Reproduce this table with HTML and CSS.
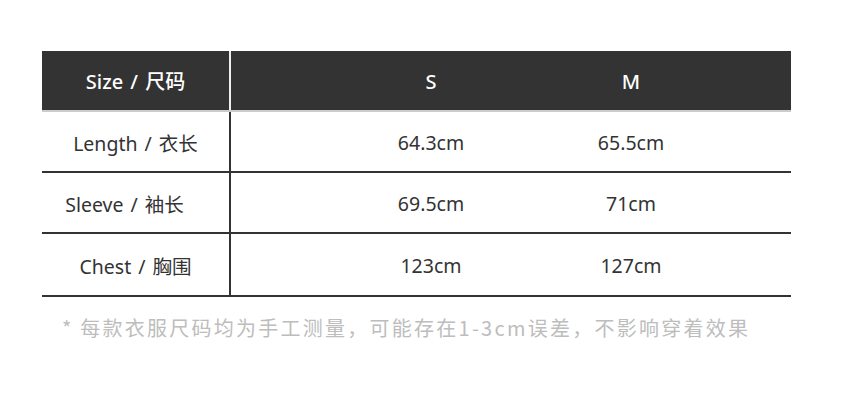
FILE: index.html
```html
<!DOCTYPE html>
<html lang="zh">
<head>
<meta charset="utf-8">
<title>Size Chart</title>
<link rel="stylesheet" href="styles.css">
</head>
<body>
<div class="chart">
  <div class="row head">
    <div class="label">Size / 尺码</div>
    <div class="vals"><div class="val">S</div><div class="val">M</div></div>
  </div>
  <div class="row">
    <div class="label">Length / 衣长</div>
    <div class="vals"><div class="val">64.3cm</div><div class="val">65.5cm</div></div>
  </div>
  <div class="row">
    <div class="label"><span class="shift-left">Sleeve / 袖长</span></div>
    <div class="vals"><div class="val">69.5cm</div><div class="val">71cm</div></div>
  </div>
  <div class="row last">
    <div class="label">Chest / 胸围</div>
    <div class="vals"><div class="val">123cm</div><div class="val">127cm</div></div>
  </div>
</div>
<p class="note">* 每款衣服尺码均为手工测量，可能存在1-3cm误差，不影响穿着效果</p>
</body>
</html>
```

FILE: styles.css
```css
html, body {
  margin: 0;
  padding: 0;
  background: #fff;
}
body {
  font-family: "Noto Sans", "Noto Sans CJK SC", sans-serif;
  color: #333;
}
.chart {
  margin: 51px 0 0 42px;
  width: 749px;
}
.row {
  display: flex;
  height: 59px;
  border-bottom: 2px solid #333;
  align-items: stretch;
}
.row.last {
  height: 61px;
}
.row.head {
  background: #333;
  color: #fff;
  border-bottom: 2px solid #ccc;
  height: 59px;
}
.label {
  width: 187px;
  flex: none;
  border-right: 2px solid #333;
  display: flex;
  align-items: center;
  justify-content: center;
  font-size: 19.5px;
  word-spacing: 2px;
  padding-top: 2px;
  box-sizing: content-box;
}
.shift-left {
  margin-right: 22px;
}
.head .label {
  border-right-color: #eee;
  font-weight: 500;
  font-size: 20px;
  padding-top: 0;
}
.vals {
  display: flex;
  padding-left: 100px;
}
.val {
  width: 200px;
  display: flex;
  align-items: center;
  justify-content: center;
  font-size: 19.5px;
  padding-top: 2px;
}
.head .val {
  font-weight: 500;
  font-size: 20px;
  padding-top: 2px;
}
.note {
  margin: 17px 0 0 62px;
  font-size: 20px;
  letter-spacing: 2.25px;
  color: #bdbdbd;
  font-family: "Noto Sans CJK SC", sans-serif;
  line-height: 28px;
}
```
